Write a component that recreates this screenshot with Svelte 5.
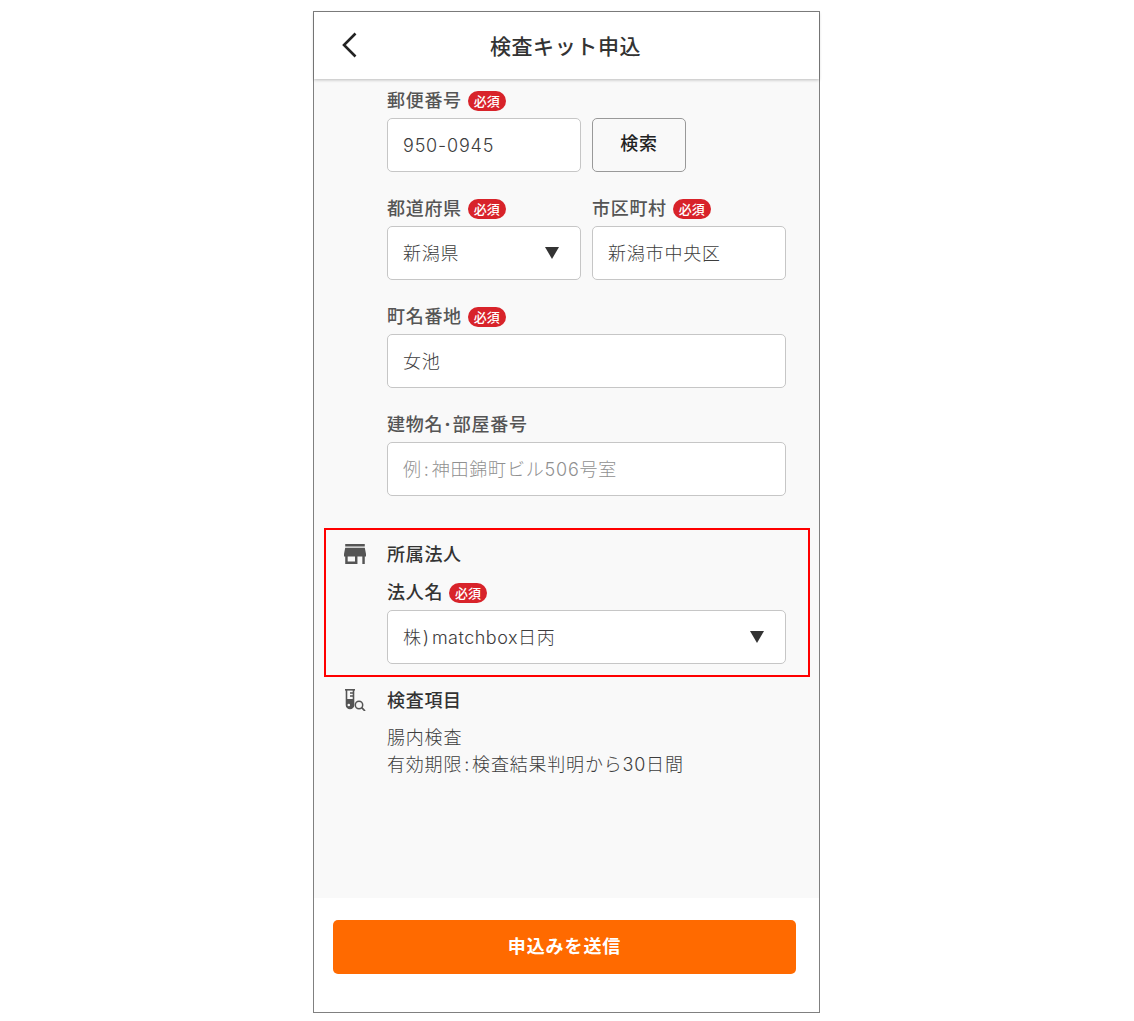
<script>
  const badge = '必須';
</script>

<div class="phone">
  <header class="top">
    <svg class="back" width="16" height="26" viewBox="0 0 16 26" aria-hidden="true"><path d="M14.5 1.5 L3 13 L14.5 24.5" fill="none" stroke="#222" stroke-width="2.6"/></svg>
    <h1>検査キット申込</h1>
  </header>

  <main class="body">
    <div class="row first">
      <div class="field half">
        <div class="label">郵便番号<span class="req">{badge}</span></div>
        <div class="box">950-0945</div>
      </div>
      <button class="search">検索</button>
    </div>

    <div class="row">
      <div class="field half">
        <div class="label">都道府県<span class="req">{badge}</span></div>
        <div class="box select">新潟県<span class="tri"></span></div>
      </div>
      <div class="field half">
        <div class="label">市区町村<span class="req">{badge}</span></div>
        <div class="box">新潟市中央区</div>
      </div>
    </div>

    <div class="row">
      <div class="field">
        <div class="label">町名番地<span class="req">{badge}</span></div>
        <div class="box">女池</div>
      </div>
    </div>

    <div class="row">
      <div class="field">
        <div class="label">建物名･部屋番号</div>
        <div class="box ph">例<span class="colon">:</span>神田錦町ビル506号室</div>
      </div>
    </div>

    <section class="corp">
      <div class="highlight"></div>
      <svg class="icon store" width="22" height="20" viewBox="3 4 18 16" preserveAspectRatio="none" aria-hidden="true"><path fill="#555" d="M20 4H4v2h16V4zm1 10v-2l-1-5H4l-1 5v2h1v6h10v-6h4v6h2v-6h1zm-9 4H6v-4h6v4z"/></svg>
      <div class="sec-title">所属法人</div>
      <div class="field">
        <div class="label dark">法人名<span class="req">{badge}</span></div>
        <div class="box select">株<span class="paren">)</span><span class="latin">matchbox</span>日丙<span class="tri"></span></div>
      </div>
    </section>

    <section class="items">
      <svg class="icon tube" width="21" height="22" viewBox="0 0 21 22" aria-hidden="true">
        <path d="M0 .8h10" stroke="#555" stroke-width="1.600" fill="none"/>
        <path d="M1.500 1v15a3.500 3.500 0 0 0 7 0V1" fill="none" stroke="#555" stroke-width="1.600"/>
        <path d="M1.500 10h7v6a3.500 3.500 0 0 1-7 0z" fill="#555"/>
        <path d="M5 4h3M5 7h3" stroke="#555" stroke-width="1.300"/>
        <circle cx="3.800" cy="16" r="1.300" fill="#f9f9f9"/>
        <circle cx="14" cy="16" r="3.700" fill="#f9f9f9" stroke="#555" stroke-width="1.500"/>
        <path d="M16.700 18.700l3.300 3.300" stroke="#555" stroke-width="1.700"/>
      </svg>
      <div class="sec-title long">検査項目</div>
      <p class="desc">腸内検査<br />有効期限<span class="colon">:</span>検査結果判明から30日間</p>
    </section>
  </main>

  <footer class="bottom">
    <button class="submit">申込みを送信</button>
  </footer>
</div>

<style>
  :global(body) {
    margin: 0;
    background: #fff;
    font-family: Inter, "Noto Sans CJK JP", sans-serif;
  }
  .phone {
    box-sizing: border-box;
    width: 507px;
    height: 1002px;
    margin: 11px 0 0 313px;
    border: 1px solid #808080;
    display: flex;
    flex-direction: column;
    background: #fff;
  }
  .top {
    position: relative;
    height: 67px;
    flex: none;
    display: flex;
    align-items: center;
    justify-content: center;
    background: #fff;
    box-shadow: 0 1px 3px rgba(0, 0, 0, 0.25);
    z-index: 1;
  }
  .back {
    position: absolute;
    left: 27px;
    top: 20px;
  }
  h1 {
    margin: 0;
    font: 500 21px/1 "Noto Sans CJK JP", sans-serif;
    color: #333;
    letter-spacing: 0.6px;
    position: relative;
    left: -1px;
  }
  .body {
    flex: 1;
    background: #f9f9f9;
    padding: 0 33px 0 73px;
    display: flex;
    flex-direction: column;
  }
  .row {
    display: flex;
    gap: 11px;
    margin-top: 24px;
  }
  .row.first {
    margin-top: 9px;
  }
  .field {
    flex: 1;
    min-width: 0;
  }
  .field.half {
    flex: 0 0 194px;
  }
  .label {
    height: 30px;
    font: 500 18px/22px "Noto Sans CJK JP", sans-serif;
    color: #555;
    display: flex;
    align-items: flex-start;
    letter-spacing: 0.7px;
  }
  .label.dark {
    color: #333;
  }
  .req {
    margin-left: 6px;
    margin-top: 3px;
    width: 38px;
    height: 20px;
    border-radius: 10px;
    background: #d8232a;
    color: #fff;
    font-size: 13px;
    line-height: 20px;
    text-align: center;
    letter-spacing: 0;
    font-weight: 500;
  }
  .box {
    box-sizing: border-box;
    height: 54px;
    background: #fff;
    border: 1.500px solid #c6c6c6;
    border-radius: 5px;
    padding: 0 15px;
    font-size: 18px;
    line-height: 53px;
    color: #3d3d3d;
    position: relative;
    font-weight: 300;
    letter-spacing: 0.8px;
  }
  .box.ph {
    color: #909090;
  }
  .colon {
    margin: 0 2px;
  }
  .paren {
    margin: 0 2px 0 1px;
  }
  .latin {
    letter-spacing: 0.5px;
  }
  .tri {
    position: absolute;
    right: 21px;
    top: 20px;
    width: 0;
    height: 0;
    border-left: 7px solid transparent;
    border-right: 7px solid transparent;
    border-top: 12px solid #333;
  }
  .search {
    box-sizing: border-box;
    width: 94px;
    height: 54px;
    background: #f9f9f9;
    border: 1.500px solid #999;
    border-radius: 5px;
    font: 500 18px "Noto Sans CJK JP", sans-serif;
    letter-spacing: 0.7px;
    color: #222;
    margin-top: 30px;
    padding: 0 0 6px;
  }
  .corp {
    position: relative;
    margin-top: 46px;
  }
  .highlight {
    position: absolute;
    left: -63px;
    right: -24px;
    top: -14px;
    bottom: -13px;
    border: 2px solid #f00;
    pointer-events: none;
  }
  .icon {
    position: absolute;
  }
  .store {
    left: -43px;
    top: 2px;
  }
  .sec-title {
    font: 500 18px/22px "Noto Sans CJK JP", sans-serif;
    color: #333;
    height: 38px;
    letter-spacing: 0.7px;
  }
  .sec-title.long {
    height: 36px;
  }
  .items {
    position: relative;
    margin-top: 24px;
  }
  .tube {
    left: -42px;
    top: 1px;
  }
  .desc {
    margin: 0;
    font-size: 18px;
    font-weight: 300;
    color: #3d3d3d;
    line-height: 27px;
    letter-spacing: 0.8px;
  }
  .bottom {
    flex: none;
    height: 114px;
    background: #fff;
    padding: 22px 23px 0 19px;
    box-sizing: border-box;
  }
  .submit {
    width: 100%;
    height: 54px;
    border: 0;
    border-radius: 5px;
    background: #ff6a00;
    color: #fff;
    font: 700 18px "Noto Sans CJK JP", sans-serif;
    letter-spacing: 0.9px;
    padding: 0 0 4px;
  }
</style>
